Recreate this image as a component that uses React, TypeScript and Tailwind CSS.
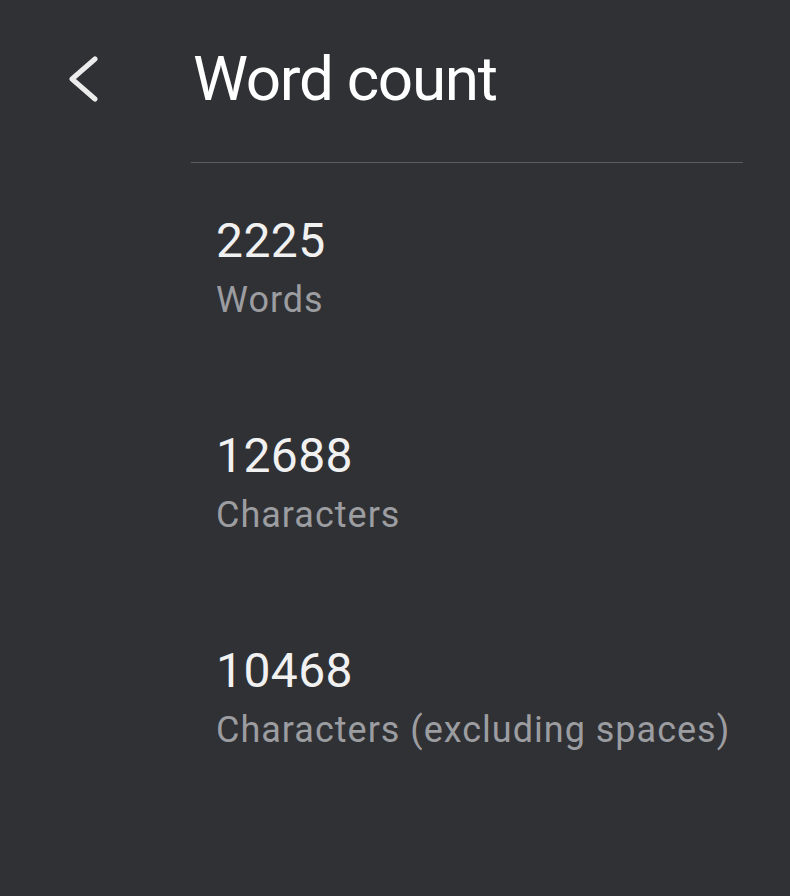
import React from 'react';

const stats = [
  { value: '2225', label: 'Words' },
  { value: '12688', label: 'Characters' },
  { value: '10468', label: 'Characters (excluding spaces)' },
];

export default function App() {
  return (
    <div
      className="w-[790px] h-[896px] bg-[#303135] overflow-hidden"
      style={{ fontFamily: 'Roboto, "Noto Sans", sans-serif' }}
    >
      {/* Header */}
      <div className="flex items-start pt-[48px]">
        <button className="w-[193px] flex pl-[66px] pt-[8px]">
          <svg width="34" height="46" viewBox="0 0 34 46" fill="none">
            <path
              d="M29 3 L6 23 L29 43"
              stroke="#ececec"
              strokeWidth="5"
              strokeLinecap="round"
              strokeLinejoin="round"
            />
          </svg>
        </button>
        <h1 className="text-[62px] leading-none text-white tracking-[-1.3px]">Word count</h1>
      </div>

      <div className="ml-[191px] mr-[47px] mt-[52px] h-px bg-[#5b5c60]" />

      {/* Stats */}
      <div className="flex flex-col pl-[216px] pt-[54px] gap-[114px]">
        {stats.map((s) => (
          <div key={s.label} className="flex flex-col gap-[17px]">
            <span className="text-[48px] leading-none text-[#f1f1f2] tracking-[0.4px]">{s.value}</span>
            <span className="text-[36px] leading-none text-[#9c9da1] tracking-[1px]">{s.label}</span>
          </div>
        ))}
      </div>
    </div>
  );
}
